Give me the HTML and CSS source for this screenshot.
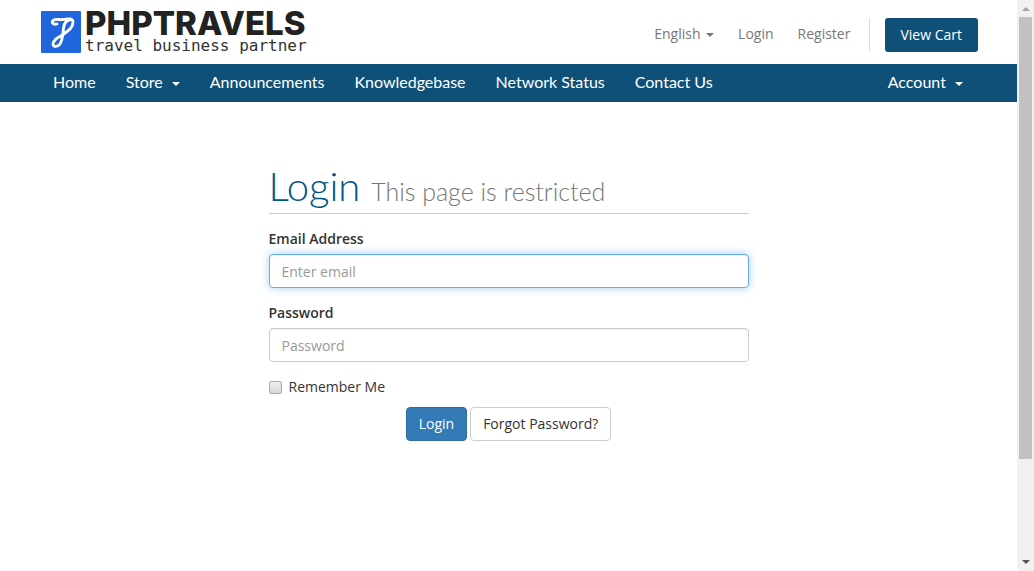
FILE: index.html
```html
<!DOCTYPE html>
<html lang="en">
<head>
<meta charset="utf-8">
<title>Login - PHPTRAVELS</title>
<link rel="stylesheet" href="styles.css">
</head>
<body>
<div class="page">
  <header class="header">
    <a class="logo" href="#">
      <svg class="logo-mark" viewBox="0 0 40 42" aria-hidden="true">
        <rect width="40" height="42" rx="1" fill="#1f66dd"/>
        <path d="M16 13C12 14 10 11 12 9.500C15 7.500 18 9 22 8.500C27 7.500 32 7 32 11C32 17 27 20 22 23.500C17 26.500 12 29 12 33C12 36.500 17 36 19 33C22 28 22 22 22.500 17C23 13 25 9 30 8.500" fill="none" stroke="#fff" stroke-width="2.800" stroke-linecap="round" stroke-linejoin="round"/>
      </svg>
      <span class="logo-text">
        <span class="logo-name">PHPTRAVELS</span>
        <span class="logo-tag">travel business partner</span>
      </span>
    </a>
    <nav class="top-nav" aria-label="Client">
      <a class="top-link" href="#">English <span class="caret"></span></a>
      <a class="top-link" href="#">Login</a>
      <a class="top-link" href="#">Register</a>
      <span class="cart"><a class="cart-button" href="#">View Cart</a></span>
    </nav>
  </header>
  <nav class="main-nav" aria-label="Main">
    <a href="#">Home</a>
    <a href="#">Store <span class="caret"></span></a>
    <a href="#">Announcements</a>
    <a href="#">Knowledgebase</a>
    <a href="#">Network Status</a>
    <a href="#">Contact Us</a>
    <a class="account" href="#">Account <span class="caret"></span></a>
  </nav>
  <main class="login">
    <h1 class="title">Login <small>This page is restricted</small></h1>
    <form>
      <div class="field">
        <label for="email">Email Address</label>
        <input class="control focused" id="email" type="email" placeholder="Enter email">
      </div>
      <div class="field">
        <label for="password">Password</label>
        <input class="control" id="password" type="password" placeholder="Password">
      </div>
      <label class="remember"><input type="checkbox"> Remember Me</label>
      <div class="actions">
        <button class="button primary" type="submit">Login</button>
        <a class="button" href="#">Forgot Password?</a>
      </div>
    </form>
  </main>
</div>
<div class="scrollbar" aria-hidden="true">
  <span class="arrow up"></span>
  <span class="thumb"></span>
  <span class="arrow down"></span>
</div>
</body>
</html>
```
FILE: styles.css
```css
* { box-sizing: border-box; }
body {
  margin: 0;
  min-height: 100vh;
  display: flex;
  background: #fff;
  color: #333;
  font: 14px/20px "Open Sans", sans-serif;
}
a { color: inherit; text-decoration: none; }
.page { flex: 1; min-width: 0; }
.header {
  display: flex;
  justify-content: space-between;
  height: 64px;
  padding: 0 39px 0 41px;
}
.logo { display: flex; gap: 4px; padding-top: 11px; color: #222; }
.logo-mark { width: 40px; height: 42px; }
.logo-text { display: flex; flex-direction: column; white-space: nowrap; }
.logo-name { font: 800 33px/25px Inter, sans-serif; }
.logo-tag { color: #333; font: 16px/20px "DejaVu Sans Mono", monospace; }
.top-nav {
  display: flex;
  align-items: center;
  gap: 24px;
  height: 34px;
  margin-top: 18px;
  color: #777;
}
.top-link { padding-bottom: 2px; }
.caret {
  display: inline-block;
  margin-left: 2px;
  vertical-align: middle;
  border: 4px solid transparent;
  border-top-color: currentColor;
  border-bottom: 0;
}
.cart { padding-left: 15px; margin-left: -5px; border-left: 1px solid #ddd; }
.cart-button {
  display: block;
  padding: 7px 16px 7px 15px;
  border-radius: 3px;
  background: #0f5078;
  color: #fff;
}
.main-nav {
  display: flex;
  gap: 30px;
  padding: 8px 54px 10px 53px;
  background: #0f5078;
  color: #fff;
  font: 16px/20px Lato, sans-serif;
  white-space: nowrap;
}
.main-nav .caret { margin-left: 5px; }
.account { margin-left: auto; }
.login { max-width: 480px; margin: 66px auto 0; }
.title {
  margin: 0 0 15px;
  padding-bottom: 9px;
  border-bottom: 1px solid #ccc;
  color: #058;
  font: 300 40px/36px Lato, sans-serif;
}
.title small { color: #777; font-size: 25px; line-height: 24px; }
.field { display: flex; flex-direction: column; gap: 5px; margin-bottom: 15px; }
.field label { font-weight: 600; }
.control {
  width: 100%;
  height: 34px;
  padding: 6px 12px;
  border: 1px solid #ccc;
  border-radius: 4px;
  background: #fff;
  box-shadow: inset 0 1px 1px rgba(0, 0, 0, .075);
  color: #555;
  font: inherit;
}
.control::placeholder { color: #999; }
.control.focused {
  border-color: #66afe9;
  box-shadow: inset 0 1px 1px rgba(0, 0, 0, .075), 0 0 8px rgba(102, 175, 233, .6);
}
.remember { display: flex; align-items: center; gap: 7px; margin-bottom: 10px; }
.remember input {
  appearance: none;
  width: 13px;
  height: 13px;
  margin: 0;
  border: 1px solid #aaa;
  border-radius: 2px;
  background: linear-gradient(#eee, #d8d8d8);
}
.actions { display: flex; justify-content: center; gap: 3px; }
.button {
  padding: 6px 12px;
  border: 1px solid #ccc;
  border-radius: 4px;
  background: #fff;
  color: #333;
  font: inherit;
}
.button.primary { border-color: #2e6da4; background: #337ab7; color: #fff; }
.scrollbar {
  display: flex;
  flex-direction: column;
  align-items: center;
  width: 17px;
  height: 100vh;
  padding: 7px 2px;
  background: #f1f1f1;
}
.arrow { border: 4px solid transparent; }
.arrow.up { border-top: 0; border-bottom-color: #a3a3a3; }
.arrow.down { margin-top: auto; border-bottom: 0; border-top-color: #505050; }
.thumb { width: 13px; height: 442px; margin-top: 6px; background: #c1c1c1; }
```
